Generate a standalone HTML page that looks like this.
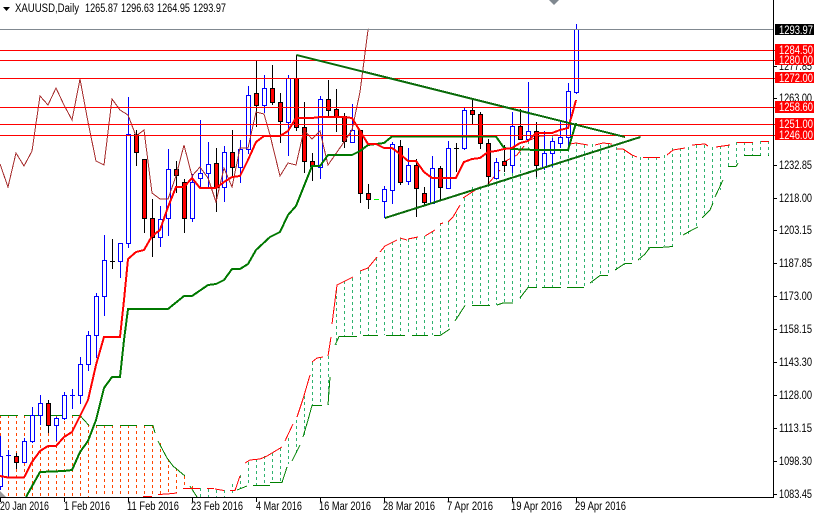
<!DOCTYPE html>
<html>
<head>
<meta charset="utf-8">
<title>XAUUSD Daily</title>
<style>
html,body{margin:0;padding:0;background:#fff;width:814px;height:514px;overflow:hidden}
svg{display:block}
text{font-family:"Liberation Sans",sans-serif;font-size:11.5px;fill:#000}
</style>
</head>
<body>
<svg width="814" height="514" viewBox="0 0 814 514" xmlns="http://www.w3.org/2000/svg">
<rect width="814" height="514" fill="#fff"/>

<!-- cloud hatching -->
<g shape-rendering="crispEdges" fill="none" stroke-width="1" stroke-dasharray="3 3">
<path stroke="#ff4500" d="M.5 415V497M8.5 415V497M16.5 415V497M24.5 415V497M32.5 415V497M40.5 415V497M48.5 415V497M56.5 415V497M64.5 415V497M72.5 415V497M80.5 415V497M88.5 424V497M96.5 425V497M104.5 425V497M112.5 425V497M120.5 425V497M128.5 425V497M136.5 425V497M144.5 425V497M152.5 425V497M160.5 443V495M168.5 459V494M176.5 468V493M184.5 476V488M192.5 486V488"/>
<path stroke="#2fb36f" d="M200.5 488V497M208.5 489V497M216.5 490V497M224.5 490V497M232.5 484V495M240.5 475V488M248.5 462V485M256.5 459V485M264.5 456V485M272.5 453V482M280.5 448V482M288.5 438V464M296.5 420V453M304.5 396V436M312.5 362V405M320.5 357V405M328.5 356V405M336.5 290V345M344.5 281V336M352.5 278V336M360.5 271V336M368.5 268V335M376.5 258V335M384.5 250V335M392.5 242V335M400.5 238V335M408.5 239V335M416.5 237V335M424.5 236V335M432.5 231V335M440.5 223V335M448.5 222V329M456.5 214V321M464.5 198V306M472.5 187V305M480.5 187V305M488.5 184V305M496.5 171V305M504.5 161V303M512.5 155V302M520.5 146V302M528.5 141V287M536.5 140V287M544.5 135V287M552.5 135V287M560.5 138V287M568.5 143V287M576.5 143V287M584.5 145V287M592.5 144V283M600.5 145V275M608.5 144V275M616.5 147V270M624.5 150V265M632.5 155V263M640.5 157V260M648.5 157V250M656.5 157V247M664.5 155V246M672.5 148V246M680.5 148V238M688.5 147V234M696.5 145V229M704.5 145V214M712.5 147V204M720.5 146V190M728.5 145V167M736.5 142V164M744.5 142V155M752.5 142V155M760.5 141V155M768.5 141V155"/>
</g>

<!-- cloud edges -->
<g shape-rendering="crispEdges" fill="none" stroke-width="1">
<path stroke="#008000" d="M0 415.5H18M24 415.5H42M48 415.5H66M72 415.5H80L89 425.5M96 425.5H113M120 425.5H137M144 425.5H153L155 433M158 441L167 458L173 466L185 476M190 486L197 497M237 490L247 486M253 485.5H270M270 482.5H282L287 467M292 461L300 445M303 437L308 420L312 405.5H322M328 405L330 377M335 345L337 341L339 336.5H357M363 335.5H378M386 335.5H405M412 335.5H428M434 335.5H440L450 329M455 321L465 305.5M472 305.5H490M497 305L503 303H513M520 298L528 287.5H537M542 287.5H561M567 287.5H584M590 283L600 275.5H608M615 270L625 263.5H632M638 260L645 254L650 247.5H660L673 246.5M683 235L692 230L698 227M702 218L710 210L713 203M715 197L723 180M728 166.5H736L738 163M744 155.5H761M768 155.5H769"/>
<path stroke="#ff0000" d="M143 496.5H152M158 494.5L167 494L177 493M183 488.5H200M207 488.5H214M215 489L224 490.5M230 490.5H235L240 476M245 463L250 460L260 459L267 456L282 447M285 441L293 424M297 417L303 399L310 375M312 362L317 358L323 357M328 356L331 337M332 324L337 285L353 277M360 271L368 268L377 257M380 252L385 246L397 240M400 238L407 240M408 239L418 237M425 236L435 230M440 224L443 223M448 222L453 217L460 205M463 198L480 187M488 184L500 170M502 163L517 155L524 146M530 140L540 136L558 135M570 144L576 143L588 145M595 145L603 143L612 144M617 149L623 149L632 155L637 157M643 157.5H660M667 155L673 150L685 148M692 145L705 144L708 146M716 147L730 145M737 142.5H753M761 141.5H769"/>
</g>

<!-- candles -->
<g shape-rendering="crispEdges" stroke-width="1">
<g stroke="#0000ff" fill="#fff">
<path d="M.5 436V456M.5 486V490M-1.5 456.5h4v30h-4z"/>
<path fill="none" d="M8.5 450V477M6 455.5H11M72.5 389V409M70 395.5H75"/>
<path d="M24.5 438V441M22.5 441.5h4v21h-4z"/>
<path d="M32.5 407V415M32.5 441V443M30.5 415.5h4v26h-4z"/>
<path d="M40.5 395V403M40.5 415V425M38.5 403.5h4v12h-4z"/>
<path d="M56.5 417V418M56.5 425V441M54.5 418.5h4v7h-4z"/>
<path d="M64.5 392V395M64.5 418V420M62.5 395.5h4v23h-4z"/>
<path d="M80.5 357V364M80.5 395V404M78.5 364.5h4v31h-4z"/>
<path d="M88.5 331V335M88.5 364V371M86.5 335.5h4v29h-4z"/>
<path d="M96.5 293V296M96.5 335V358M94.5 296.5h4v39h-4z"/>
<path d="M104.5 235V260M104.5 296V316M102.5 260.5h4v36h-4z"/>
<path d="M120.5 261V278M118.5 243.5h4v18h-4z"/>
<path d="M128.5 97V134M128.5 243V248M126.5 134.5h4v109h-4z"/>
<path d="M160.5 206V219M160.5 237V247M158.5 219.5h4v18h-4z"/>
<path d="M168.5 149V169M168.5 218V236M166.5 169.5h4v49h-4z"/>
<path d="M192.5 174V182M192.5 218V222M190.5 182.5h4v36h-4z"/>
<path d="M200.5 120V173M200.5 178V187M198.5 173.5h4v5h-4z"/>
<path d="M208.5 142V164M208.5 173V188M206.5 164.5h4v9h-4z"/>
<path d="M224.5 146V152M224.5 187V202M222.5 152.5h4v35h-4z"/>
<path d="M240.5 140V149M240.5 167V183M238.5 149.5h4v18h-4z"/>
<path d="M248.5 86V95M248.5 149V154M246.5 95.5h4v54h-4z"/>
<path d="M264.5 75V88M264.5 105V113M262.5 88.5h4v17h-4z"/>
<path d="M288.5 75V78M288.5 122V156M286.5 78.5h4v44h-4z"/>
<path d="M320.5 96V99M320.5 167V179M318.5 99.5h4v68h-4z"/>
<path d="M352.5 104V130M352.5 142V143M350.5 130.5h4v12h-4z"/>
<path d="M384.5 186V189M384.5 201V218M382.5 189.5h4v12h-4z"/>
<path d="M392.5 142V144M392.5 190V204M390.5 144.5h4v46h-4z"/>
<path d="M408.5 148V165M408.5 181V185M406.5 165.5h4v16h-4z"/>
<path d="M432.5 156V168M432.5 203V204M430.5 168.5h4v35h-4z"/>
<path d="M448.5 141V148M446.5 148.5h4v40h-4z"/>
<path d="M464.5 108V110M464.5 148V150M462.5 110.5h4v38h-4z"/>
<path d="M496.5 158V162M494.5 162.5h4v16h-4z"/>
<path d="M512.5 112V126M512.5 165V173M510.5 126.5h4v39h-4z"/>
<path d="M528.5 82V131M528.5 139V142M526.5 131.5h4v8h-4z"/>
<path d="M544.5 131V153M544.5 167V170M542.5 153.5h4v14h-4z"/>
<path d="M552.5 138V141M552.5 153V167M550.5 141.5h4v12h-4z"/>
<path d="M560.5 122V137M560.5 143V148M558.5 137.5h4v6h-4z"/>
<path d="M568.5 83V91M568.5 137V147M566.5 91.5h4v46h-4z"/>
<path d="M576.5 24V29M576.5 92V94M574.5 29.5h4v63h-4z"/>
</g>
<g stroke="#000" fill="#f00">
<path d="M16.5 453V456M16.5 462V469M14.5 456.5h4v6h-4z"/>
<path d="M48.5 400V403M48.5 425V433M46.5 403.5h4v22h-4z"/>
<path d="M136.5 130V134M136.5 152V166M134.5 134.5h4v18h-4z"/>
<path d="M144.5 218V233M142.5 159.5h4v59h-4z"/>
<path d="M152.5 199V218M152.5 237V257M150.5 218.5h4v19h-4z"/>
<path d="M176.5 161V169M176.5 175V193M174.5 169.5h4v6h-4z"/>
<path d="M184.5 179V182M184.5 218V233M182.5 182.5h4v36h-4z"/>
<path d="M216.5 148V163M216.5 187V212M214.5 163.5h4v24h-4z"/>
<path d="M232.5 130V152M232.5 167V177M230.5 152.5h4v15h-4z"/>
<path d="M256.5 61V93M256.5 105V127M254.5 93.5h4v12h-4z"/>
<path d="M272.5 65V88M272.5 102V105M270.5 88.5h4v14h-4z"/>
<path d="M280.5 93V102M280.5 121V143M278.5 102.5h4v19h-4z"/>
<path d="M296.5 55V78M296.5 127V131M294.5 78.5h4v49h-4z"/>
<path d="M304.5 102V127M304.5 161V173M302.5 127.5h4v34h-4z"/>
<path d="M312.5 153V161M312.5 166V181M310.5 161.5h4v5h-4z"/>
<path d="M328.5 80V99M328.5 110V117M326.5 99.5h4v11h-4z"/>
<path d="M336.5 89V109M336.5 116V132M334.5 109.5h4v7h-4z"/>
<path d="M344.5 113V116M344.5 141V148M342.5 116.5h4v25h-4z"/>
<path d="M360.5 193V203M358.5 130.5h4v63h-4z"/>
<path d="M368.5 184V193M368.5 199V209M366.5 193.5h4v6h-4z"/>
<path d="M400.5 140V146M400.5 182V185M398.5 146.5h4v36h-4z"/>
<path d="M416.5 159V165M416.5 188V217M414.5 165.5h4v23h-4z"/>
<path d="M424.5 187V193M424.5 202V205M422.5 193.5h4v9h-4z"/>
<path d="M440.5 166V168M440.5 187V200M438.5 168.5h4v19h-4z"/>
<path d="M472.5 100V110M472.5 114V124M470.5 110.5h4v4h-4z"/>
<path d="M480.5 112V114M480.5 143V149M478.5 114.5h4v29h-4z"/>
<path d="M488.5 139V143M488.5 176V185M486.5 143.5h4v33h-4z"/>
<path d="M504.5 145V161M504.5 165V172M502.5 161.5h4v4h-4z"/>
<path d="M520.5 109V126M520.5 139V140M518.5 126.5h4v13h-4z"/>
<path d="M536.5 122V131M536.5 165V177M534.5 131.5h4v34h-4z"/>
</g>
<path stroke="#000" fill="none" d="M112.5 239V269M110 261.5H115M456.5 143V172M454 148.5H459"/>
<path stroke="#00ff00" fill="none" d="M374 199.5H379"/>
</g>

<!-- chikou -->
<path shape-rendering="crispEdges" fill="none" stroke="#a52a2a" stroke-width="1" d="M0 164L8 187L16 153L24 166L32 151L40 96L48 105L56 88L64 105L72 120L80 79L88 122L96 161L104 165L112 99L120 110L128 115L136 136L144 130L152 193L160 199L168 199L176 176L184 145L192 176L200 167L208 178L216 202L224 168L232 187L240 148L248 148L256 112L264 114L270 135L280 176L288 163L296 165L304 130L312 139L320 131L328 165L344 142L352 130L360 92L368 30L369 29"/>

<!-- kijun -->
<path shape-rendering="crispEdges" fill="none" stroke="#007800" stroke-width="2" d="M26 497L40 472L64 471L72 470L80 452L88 441L96 420L104 388L112 377L120 377L124 340L128 309H168L184 296H192L208 285L216 284L224 280L232 269H240L248 264L256 250L270 237L280 232L288 215L296 206L304 186L312 166H320L328 155H352L360 151L368 145L384 143L392 136.5H496L504 148L512 149L536 150H568L576 123"/>
<!-- tenkan -->
<path shape-rendering="crispEdges" fill="none" stroke="#ff0000" stroke-width="2" d="M0 476L8 477.5H24L32 462L40 451L48 446H56L64 437L72 432L80 416L88 400L96 365L104 337H120L124 300L128 259L136 252L144 250L152 236L160 230L168 207L176 187H184L192 178L200 188H216L224 182L232 177L240 176L248 160L256 142L264 136H280L288 131L296 118H312L320 117H344L352 118L360 131L368 144H376L384 148H392L400 154L408 161H416L424 172L432 178H456L464 162L472 159L480 158L488 152L496 151L504 149L512 148L520 143L528 141L536 133H552L560 130L568 128L572 115L576 100"/>

<!-- objects -->
<g shape-rendering="crispEdges" fill="none">
<path stroke="#808890" d="M0 29.5H773"/>
<path stroke="#ff0000" d="M0 50.5H775M0 60.5H775M0 78.5H775M0 107.5H775M0 124.5H775M0 135.5H775"/>
<path stroke="#0a6b0a" stroke-width="2" d="M296.5 55L625 137M385 218L640.5 137"/>
</g>

<!-- markers -->
<path d="M549 0H559L554 5Z" fill="#808890"/>
<path d="M0 491V497H6Z" fill="#9a9a9a"/>
<path d="M3 7H10L6.5 11Z" fill="#000"/>

<!-- axes -->
<g shape-rendering="crispEdges" stroke="#000" fill="none">
<path d="M773.5 0V497.5H0"/>
<path d="M.5 497V502M64.5 497V502M128.5 497V502M192.5 497V502M256.5 497V502M320.5 497V502M384.5 497V502M448.5 497V502M512.5 497V502M576.5 497V502"/>
<path d="M773 66.5H777M773 98.5H777M773 165.5H777M773 198.5H777M773 230.5H777M773 263.5H777M773 296.5H777M773 329.5H777M773 362.5H777M773 395.5H777M773 428.5H777M773 461.5H777M773 494.5H777"/>
</g>

<!-- axis text -->
<g>
<text x="779" y="70" textLength="33" lengthAdjust="spacingAndGlyphs">1277.85</text>
<text x="779" y="102" textLength="33" lengthAdjust="spacingAndGlyphs">1263.00</text>
<text x="779" y="169" textLength="33" lengthAdjust="spacingAndGlyphs">1232.85</text>
<text x="779" y="202" textLength="33" lengthAdjust="spacingAndGlyphs">1218.00</text>
<text x="779" y="234" textLength="33" lengthAdjust="spacingAndGlyphs">1203.15</text>
<text x="779" y="267" textLength="33" lengthAdjust="spacingAndGlyphs">1187.85</text>
<text x="779" y="300" textLength="33" lengthAdjust="spacingAndGlyphs">1173.00</text>
<text x="779" y="333" textLength="33" lengthAdjust="spacingAndGlyphs">1158.15</text>
<text x="779" y="366" textLength="33" lengthAdjust="spacingAndGlyphs">1143.30</text>
<text x="779" y="399" textLength="33" lengthAdjust="spacingAndGlyphs">1128.00</text>
<text x="779" y="432" textLength="33" lengthAdjust="spacingAndGlyphs">1113.15</text>
<text x="779" y="465" textLength="33" lengthAdjust="spacingAndGlyphs">1098.30</text>
<text x="779" y="498" textLength="33" lengthAdjust="spacingAndGlyphs">1083.45</text>
</g>

<!-- price labels -->
<g shape-rendering="crispEdges">
<rect x="775" y="24" width="39" height="11" fill="#000"/>
<rect x="775" y="44" width="39" height="21" fill="#f00"/>
<rect x="775" y="72" width="39" height="11" fill="#f00"/>
<rect x="775" y="101" width="39" height="12" fill="#f00"/>
<rect x="775" y="118" width="39" height="22" fill="#f00"/>
</g>
<g style="fill:#fff">
<text style="fill:#fff" x="779" y="34" textLength="34" lengthAdjust="spacingAndGlyphs">1293.97</text>
<text style="fill:#fff" x="779" y="54" textLength="34" lengthAdjust="spacingAndGlyphs">1284.50</text>
<text style="fill:#fff" x="779" y="64" textLength="34" lengthAdjust="spacingAndGlyphs">1280.00</text>
<text style="fill:#fff" x="779" y="82" textLength="34" lengthAdjust="spacingAndGlyphs">1272.00</text>
<text style="fill:#fff" x="779" y="111" textLength="34" lengthAdjust="spacingAndGlyphs">1258.60</text>
<text style="fill:#fff" x="779" y="128" textLength="34" lengthAdjust="spacingAndGlyphs">1251.00</text>
<text style="fill:#fff" x="779" y="139" textLength="34" lengthAdjust="spacingAndGlyphs">1246.00</text>
</g>

<!-- time axis text -->
<g>
<text x="0" y="510" textLength="49" lengthAdjust="spacingAndGlyphs">20 Jan 2016</text>
<text x="64" y="510" textLength="46" lengthAdjust="spacingAndGlyphs">1 Feb 2016</text>
<text x="127" y="510" textLength="52" lengthAdjust="spacingAndGlyphs">11 Feb 2016</text>
<text x="191" y="510" textLength="52" lengthAdjust="spacingAndGlyphs">23 Feb 2016</text>
<text x="256" y="510" textLength="46" lengthAdjust="spacingAndGlyphs">4 Mar 2016</text>
<text x="319" y="510" textLength="52" lengthAdjust="spacingAndGlyphs">16 Mar 2016</text>
<text x="383" y="510" textLength="52" lengthAdjust="spacingAndGlyphs">28 Mar 2016</text>
<text x="447" y="510" textLength="46" lengthAdjust="spacingAndGlyphs">7 Apr 2016</text>
<text x="511" y="510" textLength="51" lengthAdjust="spacingAndGlyphs">19 Apr 2016</text>
<text x="575" y="510" textLength="51" lengthAdjust="spacingAndGlyphs">29 Apr 2016</text>
</g>

<!-- title -->
<text x="15" y="12" textLength="64" lengthAdjust="spacingAndGlyphs">XAUUSD,Daily</text>
<text x="85" y="12" textLength="33" lengthAdjust="spacingAndGlyphs">1265.87</text>
<text x="121" y="12" textLength="33" lengthAdjust="spacingAndGlyphs">1296.63</text>
<text x="157" y="12" textLength="33" lengthAdjust="spacingAndGlyphs">1264.95</text>
<text x="193" y="12" textLength="33" lengthAdjust="spacingAndGlyphs">1293.97</text>
</svg>
</body>
</html>
